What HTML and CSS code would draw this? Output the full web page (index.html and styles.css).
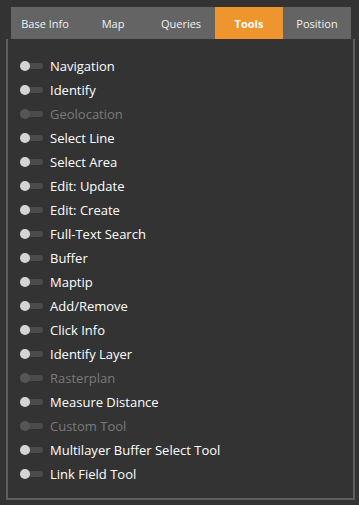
FILE: index.html
```html
<!DOCTYPE HTML>
<html>
<head>
  <title>Tools</title>
  <meta name="viewport" content="width=device-width, initial-scale=1">
  <link rel="stylesheet" href="styles.css">
</head>
<body>
  <div class="tabs">
    <div class="tab">Base Info</div>
    <div class="tab">Map</div>
    <div class="tab">Queries</div>
    <div class="tab active">Tools</div>
    <div class="tab">Position</div>
  </div>
  <div class="panel">
    <ul class="tool-list">
      <li class="tool"><span class="toggle"></span>Navigation</li>
      <li class="tool"><span class="toggle"></span>Identify</li>
      <li class="tool disabled"><span class="toggle"></span>Geolocation</li>
      <li class="tool"><span class="toggle"></span>Select Line</li>
      <li class="tool"><span class="toggle"></span>Select Area</li>
      <li class="tool"><span class="toggle"></span>Edit: Update</li>
      <li class="tool"><span class="toggle"></span>Edit: Create</li>
      <li class="tool"><span class="toggle"></span>Full-Text Search</li>
      <li class="tool"><span class="toggle"></span>Buffer</li>
      <li class="tool"><span class="toggle"></span>Maptip</li>
      <li class="tool"><span class="toggle"></span>Add/Remove</li>
      <li class="tool"><span class="toggle"></span>Click Info</li>
      <li class="tool"><span class="toggle"></span>Identify Layer</li>
      <li class="tool disabled"><span class="toggle"></span>Rasterplan</li>
      <li class="tool"><span class="toggle"></span>Measure Distance</li>
      <li class="tool disabled"><span class="toggle"></span>Custom Tool</li>
      <li class="tool"><span class="toggle"></span>Multilayer Buffer Select Tool</li>
      <li class="tool"><span class="toggle"></span>Link Field Tool</li>
    </ul>
  </div>
</body>
</html>
```

FILE: styles.css
```css
html {
  font-family: "Open Sans", "Noto Sans", sans-serif;
}
body {
  margin: 0;
  background-color: #333333;
  color: #ffffff;
}
.tabs {
  display: flex;
  margin: 7px 0 0 11px;
  width: 340px;
  height: 32px;
  background-color: #646464;
}
.tab {
  width: 68px;
  display: flex;
  align-items: center;
  justify-content: center;
  font-size: 11px;
  color: #f2f2f2;
}
.tab.active {
  background-color: #ef952e;
  color: #ffffff;
  font-weight: bold;
}
.panel {
  margin-left: 6px;
  width: 345px;
  height: 459px;
  border: 2px solid #5e5e5e;
  border-top: none;
}
.tool-list {
  list-style: none;
  margin: 0;
  padding: 15px 0 0 12px;
}
.tool {
  display: flex;
  align-items: center;
  height: 24px;
  font-size: 13px;
}
.toggle {
  position: relative;
  width: 23px;
  height: 6px;
  border-radius: 3px;
  background-color: #4b4b4b;
  margin-right: 7px;
}
.toggle::before {
  content: "";
  position: absolute;
  left: 0;
  top: -2px;
  width: 10px;
  height: 10px;
  border-radius: 50%;
  background-color: #d4d4d4;
}
.tool.disabled {
  color: #7a7a7a;
}
.tool.disabled .toggle::before {
  background-color: #555555;
}
```
